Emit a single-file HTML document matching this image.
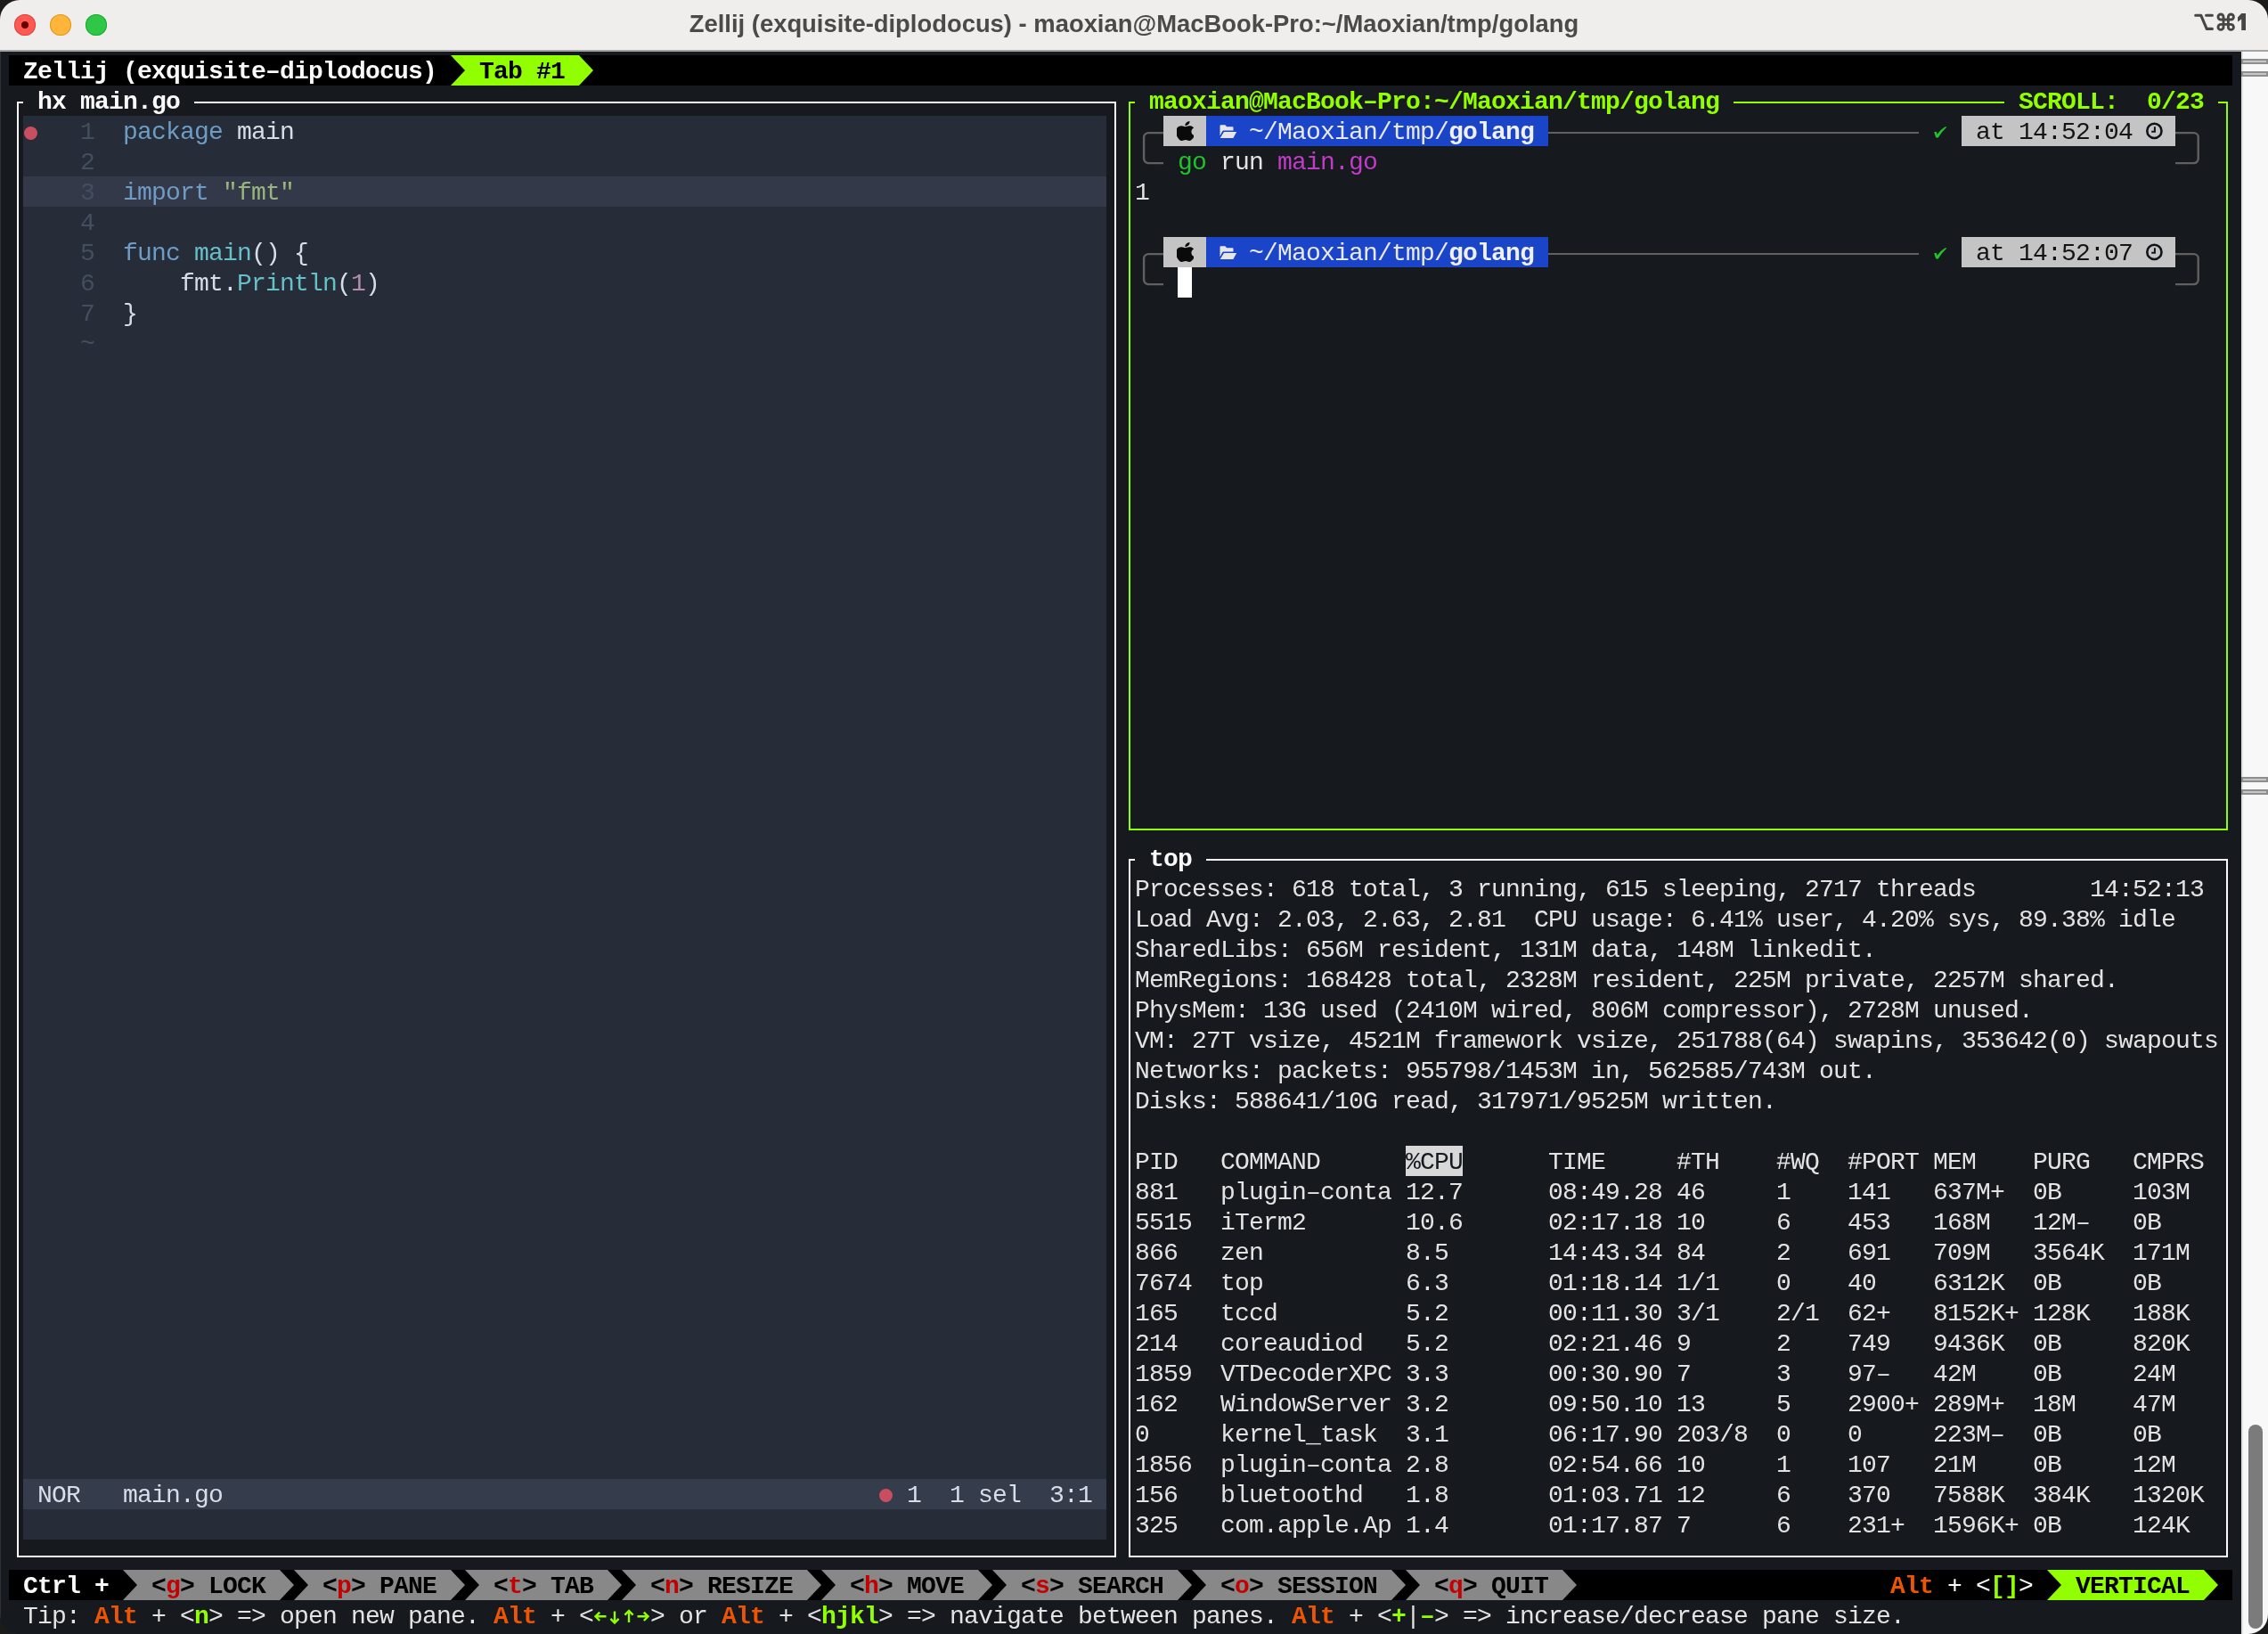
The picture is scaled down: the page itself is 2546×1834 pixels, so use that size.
<!DOCTYPE html><html><head><meta charset="utf-8"><style>
html,body{margin:0;padding:0;}
body{width:2546px;height:1834px;background:#1b1b1b;overflow:hidden;position:relative;}
#win{will-change:transform;position:absolute;left:0;top:0;width:2546px;height:1834px;border-radius:22px;overflow:hidden;background:#16191e;}
.t{position:absolute;white-space:pre;font-family:"Liberation Mono",monospace;font-size:28.0px;letter-spacing:-0.8027px;line-height:34px;}
</style></head><body><div id="win">
<div style="position:absolute;left:0px;top:0px;width:2546px;height:56px;background:#f0eeec;"></div>
<div style="position:absolute;left:0px;top:56px;width:2546px;height:2px;background:#a3a3a3;"></div>
<div style="position:absolute;left:16px;top:16px;width:24px;height:24px;border-radius:50%;background:#ff5a52;box-shadow:inset 0 0 0 1px #e0443e;"></div>
<div style="position:absolute;left:56px;top:16px;width:24px;height:24px;border-radius:50%;background:#ffb43a;box-shadow:inset 0 0 0 1px #de9a23;"></div>
<div style="position:absolute;left:96px;top:16px;width:24px;height:24px;border-radius:50%;background:#30c748;box-shadow:inset 0 0 0 1px #1aab29;"></div>
<div style="position:absolute;left:24px;top:24px;width:8px;height:8px;border-radius:50%;background:#690000;"></div>
<div style="position:absolute;left:0;top:10px;width:2546px;text-align:center;font-family:'Liberation Sans',sans-serif;font-weight:bold;font-size:27.4px;line-height:34px;color:#4a4a4a;">Zellij (exquisite-diplodocus) - maoxian@MacBook-Pro:~/Maoxian/tmp/golang</div>
<svg style="position:absolute;left:2446px;top:0px" width="100" height="50" viewBox="0 0 100 50">
<path d="M18.7 17.2 H24.7 L31.2 32.4 H37.4 M30.6 17.2 H37.4" stroke="#464646" stroke-width="3.1" fill="none" stroke-linecap="round" stroke-linejoin="round"/>
<path d="M50 27.4 V19 A3 3 0 1 0 47 22 H58.4 A3 3 0 1 0 55.4 19 V30.4 A3 3 0 1 0 58.4 27.4 H47 A3 3 0 1 0 50 30.4 V27.4" stroke="#464646" stroke-width="2.9" fill="none"/>
<polygon points="70.2,15 75,15 75,34 70.2,34 70.2,21.6 66,24.4 66,19.6" fill="#464646"/>
</svg>
<div style="position:absolute;left:2516px;top:58px;width:30px;height:1776px;background:#f8f8f8;"></div>
<div style="position:absolute;left:2516px;top:58px;width:1.5px;height:1776px;background:#e2e2e2;"></div>
<div style="position:absolute;left:2516px;top:66px;width:30px;height:5.5px;background:#8e8e8e;"></div>
<div style="position:absolute;left:2518px;top:67.8px;width:26px;height:2px;background:#c6c6c6;"></div>
<div style="position:absolute;left:2516px;top:80px;width:30px;height:5.5px;background:#8e8e8e;"></div>
<div style="position:absolute;left:2518px;top:81.8px;width:26px;height:2px;background:#c6c6c6;"></div>
<div style="position:absolute;left:2516px;top:872px;width:30px;height:5.5px;background:#8e8e8e;"></div>
<div style="position:absolute;left:2518px;top:873.8px;width:26px;height:2px;background:#c6c6c6;"></div>
<div style="position:absolute;left:2516px;top:886px;width:30px;height:5.5px;background:#8e8e8e;"></div>
<div style="position:absolute;left:2518px;top:887.8px;width:26px;height:2px;background:#c6c6c6;"></div>
<div style="position:absolute;left:2524px;top:1599px;width:16px;height:229px;border-radius:8px;background:#7b7b7b;"></div>
<div style="position:absolute;left:10px;top:62px;width:2496px;height:34px;background:#000000;"></div>
<span class="t" style="left:26px;top:63.5px;color:#fafafa;font-weight:bold;">Zellij (exquisite–diplodocus)</span>
<div style="position:absolute;left:506px;top:62px;width:144px;height:34px;background:#92ff00;"></div>
<svg style="position:absolute;left:506px;top:62px" width="16" height="34" viewBox="0 0 16 34"><polygon points="0,0 16,17.0 0,34" fill="#000000"/></svg>
<svg style="position:absolute;left:650px;top:62px" width="16" height="34" viewBox="0 0 16 34"><polygon points="0,0 16,17.0 0,34" fill="#92ff00"/></svg>
<span class="t" style="left:538px;top:63.5px;color:#000000;font-weight:bold;">Tab #1</span>
<div style="position:absolute;left:26px;top:130px;width:1216px;height:1598px;background:#262d38;"></div>
<div style="position:absolute;left:26px;top:198px;width:1216px;height:34px;background:#333949;"></div>
<div style="position:absolute;left:26px;top:1660px;width:1216px;height:34px;background:#353c4b;"></div>
<div style="position:absolute;left:19px;top:114px;width:2.2px;height:1634.2px;background:#fafafa;"></div>
<div style="position:absolute;left:1251px;top:114px;width:2.2px;height:1634.2px;background:#fafafa;"></div>
<div style="position:absolute;left:19px;top:1746px;width:1234.2px;height:2.2px;background:#fafafa;"></div>
<div style="position:absolute;left:19px;top:114px;width:7px;height:2.2px;background:#fafafa;"></div>
<div style="position:absolute;left:218px;top:114px;width:1035.2px;height:2.2px;background:#fafafa;"></div>
<span class="t" style="left:42px;top:97.5px;color:#fafafa;font-weight:bold;">hx main.go</span>
<div style="position:absolute;left:26.5px;top:141.5px;width:15.5px;height:15.5px;border-radius:50%;background:#c94f60;"></div>
<span class="t" style="left:90px;top:131.5px;color:#434e61;font-weight:normal;">1</span>
<span class="t" style="left:138px;top:131.5px;color:#6e9cc4;font-weight:normal;">package</span>
<span class="t" style="left:266px;top:131.5px;color:#d8dee9;font-weight:normal;">main</span>
<span class="t" style="left:90px;top:165.5px;color:#434e61;font-weight:normal;">2</span>
<span class="t" style="left:90px;top:199.5px;color:#434e61;font-weight:normal;">3</span>
<span class="t" style="left:138px;top:199.5px;color:#6e9cc4;font-weight:normal;">import</span>
<span class="t" style="left:250px;top:199.5px;color:#98b57f;font-weight:normal;">&quot;fmt&quot;</span>
<span class="t" style="left:90px;top:233.5px;color:#434e61;font-weight:normal;">4</span>
<span class="t" style="left:90px;top:267.5px;color:#434e61;font-weight:normal;">5</span>
<span class="t" style="left:138px;top:267.5px;color:#6e9cc4;font-weight:normal;">func</span>
<span class="t" style="left:218px;top:267.5px;color:#67bfc9;font-weight:normal;">main</span>
<span class="t" style="left:282px;top:267.5px;color:#d8dee9;font-weight:normal;">() {</span>
<span class="t" style="left:90px;top:301.5px;color:#434e61;font-weight:normal;">6</span>
<span class="t" style="left:202px;top:301.5px;color:#d8dee9;font-weight:normal;">fmt</span>
<span class="t" style="left:250px;top:301.5px;color:#d8dee9;font-weight:normal;">.</span>
<span class="t" style="left:266px;top:301.5px;color:#67bfc9;font-weight:normal;">Println</span>
<span class="t" style="left:378px;top:301.5px;color:#d8dee9;font-weight:normal;">(</span>
<span class="t" style="left:394px;top:301.5px;color:#b48ead;font-weight:normal;">1</span>
<span class="t" style="left:410px;top:301.5px;color:#d8dee9;font-weight:normal;">)</span>
<span class="t" style="left:90px;top:335.5px;color:#434e61;font-weight:normal;">7</span>
<span class="t" style="left:138px;top:335.5px;color:#d8dee9;font-weight:normal;">}</span>
<span class="t" style="left:90px;top:369.5px;color:#434e61;font-weight:normal;">~</span>
<span class="t" style="left:42px;top:1661.5px;color:#d8dee9;font-weight:normal;">NOR</span>
<span class="t" style="left:138px;top:1661.5px;color:#d8dee9;font-weight:normal;">main.go</span>
<div style="position:absolute;left:986.5px;top:1671px;width:15px;height:15px;border-radius:50%;background:#c94f60;"></div>
<span class="t" style="left:1018px;top:1661.5px;color:#d8dee9;font-weight:normal;">1</span>
<span class="t" style="left:1066px;top:1661.5px;color:#d8dee9;font-weight:normal;">1 sel</span>
<span class="t" style="left:1178px;top:1661.5px;color:#d8dee9;font-weight:normal;">3:1</span>
<div style="position:absolute;left:1267px;top:114px;width:2.2px;height:818.2px;background:#92ff00;"></div>
<div style="position:absolute;left:2499px;top:114px;width:2.2px;height:818.2px;background:#92ff00;"></div>
<div style="position:absolute;left:1267px;top:930px;width:1234.2px;height:2.2px;background:#92ff00;"></div>
<div style="position:absolute;left:1267px;top:114px;width:7px;height:2.2px;background:#92ff00;"></div>
<div style="position:absolute;left:1946px;top:114px;width:304px;height:2.2px;background:#92ff00;"></div>
<div style="position:absolute;left:2490px;top:114px;width:11.199999999999818px;height:2.2px;background:#92ff00;"></div>
<span class="t" style="left:1290px;top:97.5px;color:#92ff00;font-weight:bold;">maoxian@MacBook–Pro:~/Maoxian/tmp/golang</span>
<span class="t" style="left:2266px;top:97.5px;color:#92ff00;font-weight:bold;">SCROLL:  0/23</span>
<svg style="position:absolute;left:1274px;top:130px" width="32" height="68" viewBox="0 0 32 68"><path d="M32 19.1 H15.3 A5 5 0 0 0 10.1 24.1 V48 A5 5 0 0 0 15.3 53.1 H32" stroke="#606060" stroke-width="2.4" fill="none"/></svg>
<div style="position:absolute;left:1306px;top:130px;width:48px;height:34px;background:#c4c4c4;"></div>
<div style="position:absolute;left:1354px;top:130px;width:384px;height:34px;background:#1a45c8;"></div>
<svg style="position:absolute;left:1321px;top:136px" width="19" height="22" viewBox="3.2 0 17.8 24" preserveAspectRatio="none"><path d="M12.152 6.896c-.948 0-2.415-1.078-3.96-1.040-2.04.027-3.91 1.183-4.961 3.014-2.117 3.675-.546 9.103 1.519 12.09 1.013 1.454 2.208 3.09 3.792 3.039 1.52-.065 2.09-.987 3.935-.987 1.831 0 2.35.987 3.96.948 1.637-.026 2.676-1.48 3.676-2.948 1.156-1.688 1.636-3.325 1.662-3.415-.039-.013-3.182-1.221-3.22-4.857-.026-3.04 2.48-4.494 2.597-4.559-1.429-2.09-3.623-2.324-4.39-2.376-2-.156-3.675 1.09-4.61 1.09zM15.53 3.83c.843-1.012 1.4-2.427 1.245-3.83-1.207.052-2.662.805-3.532 1.818-.78.896-1.454 2.338-1.273 3.714 1.338.104 2.715-.688 3.559-1.701" fill="#0a0a0a"/></svg>
<svg style="position:absolute;left:1369px;top:140px" width="20" height="16" viewBox="0 0 20 16"><path d="M0.5 13.5 V1.2 Q0.5 0.3 1.4 0.3 H6.3 L8.2 2.3 H14.6 Q15.5 2.3 15.5 3.2 V6.6 H4.6 Q3.6 6.6 3.1 7.4 L0.5 12.6 Z" fill="#e6e6e6"/><path d="M5 8.1 H19.2 L15.3 15 H0.7 Z" fill="#e6e6e6"/></svg>
<span class="t" style="left:1402px;top:131.5px;color:#e8e8e8;font-weight:normal;">~/Maoxian/tmp/</span>
<span class="t" style="left:1626px;top:131.5px;color:#f0f0f0;font-weight:bold;">golang</span>
<div style="position:absolute;left:1738px;top:148px;width:416px;height:2.2px;background:#606060;"></div>
<svg style="position:absolute;left:2170px;top:141px" width="16" height="15" viewBox="0 0 16 15"><path d="M1.2 7.6 Q2.5 6.5 3.9 7.0 L4.6 9.8 Q9 3.6 14.4 0.9 L15.2 1.8 Q9.6 7 5.9 13.2 Q4.4 14.4 3.1 13.1 Z" fill="#22c22c"/></svg>
<div style="position:absolute;left:2202px;top:130px;width:240px;height:34px;background:#c4c4c4;"></div>
<span class="t" style="left:2218px;top:131.5px;color:#141414;font-weight:normal;">at 14:52:04</span>
<svg style="position:absolute;left:2409px;top:137px" width="20" height="20" viewBox="0 0 20 20"><circle cx="9.4" cy="9.9" r="8.1" stroke="#10141a" stroke-width="2.6" fill="none"/><path d="M9.9 5.3 V10.8 H6.2" stroke="#10141a" stroke-width="2" fill="none"/></svg>
<svg style="position:absolute;left:2442px;top:130px" width="32" height="68" viewBox="0 0 32 68"><path d="M0 19.1 H20.7 A5 5 0 0 1 25.7 24.1 V48 A5 5 0 0 1 20.7 53.1 H0" stroke="#606060" stroke-width="2.4" fill="none"/></svg>
<span class="t" style="left:1322px;top:165.5px;color:#22c22c;font-weight:normal;">go</span>
<span class="t" style="left:1370px;top:165.5px;color:#e3e3e3;font-weight:normal;">run</span>
<span class="t" style="left:1434px;top:165.5px;color:#c13bc8;font-weight:normal;">main.go</span>
<span class="t" style="left:1274px;top:199.5px;color:#e3e3e3;font-weight:normal;">1</span>
<svg style="position:absolute;left:1274px;top:266px" width="32" height="68" viewBox="0 0 32 68"><path d="M32 19.1 H15.3 A5 5 0 0 0 10.1 24.1 V48 A5 5 0 0 0 15.3 53.1 H32" stroke="#606060" stroke-width="2.4" fill="none"/></svg>
<div style="position:absolute;left:1306px;top:266px;width:48px;height:34px;background:#c4c4c4;"></div>
<div style="position:absolute;left:1354px;top:266px;width:384px;height:34px;background:#1a45c8;"></div>
<svg style="position:absolute;left:1321px;top:272px" width="19" height="22" viewBox="3.2 0 17.8 24" preserveAspectRatio="none"><path d="M12.152 6.896c-.948 0-2.415-1.078-3.96-1.040-2.04.027-3.91 1.183-4.961 3.014-2.117 3.675-.546 9.103 1.519 12.09 1.013 1.454 2.208 3.09 3.792 3.039 1.52-.065 2.09-.987 3.935-.987 1.831 0 2.35.987 3.96.948 1.637-.026 2.676-1.48 3.676-2.948 1.156-1.688 1.636-3.325 1.662-3.415-.039-.013-3.182-1.221-3.22-4.857-.026-3.04 2.48-4.494 2.597-4.559-1.429-2.09-3.623-2.324-4.39-2.376-2-.156-3.675 1.09-4.61 1.09zM15.53 3.83c.843-1.012 1.4-2.427 1.245-3.83-1.207.052-2.662.805-3.532 1.818-.78.896-1.454 2.338-1.273 3.714 1.338.104 2.715-.688 3.559-1.701" fill="#0a0a0a"/></svg>
<svg style="position:absolute;left:1369px;top:276px" width="20" height="16" viewBox="0 0 20 16"><path d="M0.5 13.5 V1.2 Q0.5 0.3 1.4 0.3 H6.3 L8.2 2.3 H14.6 Q15.5 2.3 15.5 3.2 V6.6 H4.6 Q3.6 6.6 3.1 7.4 L0.5 12.6 Z" fill="#e6e6e6"/><path d="M5 8.1 H19.2 L15.3 15 H0.7 Z" fill="#e6e6e6"/></svg>
<span class="t" style="left:1402px;top:267.5px;color:#e8e8e8;font-weight:normal;">~/Maoxian/tmp/</span>
<span class="t" style="left:1626px;top:267.5px;color:#f0f0f0;font-weight:bold;">golang</span>
<div style="position:absolute;left:1738px;top:284px;width:416px;height:2.2px;background:#606060;"></div>
<svg style="position:absolute;left:2170px;top:277px" width="16" height="15" viewBox="0 0 16 15"><path d="M1.2 7.6 Q2.5 6.5 3.9 7.0 L4.6 9.8 Q9 3.6 14.4 0.9 L15.2 1.8 Q9.6 7 5.9 13.2 Q4.4 14.4 3.1 13.1 Z" fill="#22c22c"/></svg>
<div style="position:absolute;left:2202px;top:266px;width:240px;height:34px;background:#c4c4c4;"></div>
<span class="t" style="left:2218px;top:267.5px;color:#141414;font-weight:normal;">at 14:52:07</span>
<svg style="position:absolute;left:2409px;top:273px" width="20" height="20" viewBox="0 0 20 20"><circle cx="9.4" cy="9.9" r="8.1" stroke="#10141a" stroke-width="2.6" fill="none"/><path d="M9.9 5.3 V10.8 H6.2" stroke="#10141a" stroke-width="2" fill="none"/></svg>
<svg style="position:absolute;left:2442px;top:266px" width="32" height="68" viewBox="0 0 32 68"><path d="M0 19.1 H20.7 A5 5 0 0 1 25.7 24.1 V48 A5 5 0 0 1 20.7 53.1 H0" stroke="#606060" stroke-width="2.4" fill="none"/></svg>
<div style="position:absolute;left:1322px;top:300px;width:16px;height:34px;background:#ffffff;"></div>
<div style="position:absolute;left:1267px;top:964px;width:2.2px;height:784.2px;background:#fafafa;"></div>
<div style="position:absolute;left:2499px;top:964px;width:2.2px;height:784.2px;background:#fafafa;"></div>
<div style="position:absolute;left:1267px;top:1746px;width:1234.2px;height:2.2px;background:#fafafa;"></div>
<div style="position:absolute;left:1267px;top:964px;width:7px;height:2.2px;background:#fafafa;"></div>
<div style="position:absolute;left:1354px;top:964px;width:1147.1999999999998px;height:2.2px;background:#fafafa;"></div>
<span class="t" style="left:1290px;top:947.5px;color:#fafafa;font-weight:bold;">top</span>
<span class="t" style="left:1274px;top:981.5px;color:#e3e3e3;font-weight:normal;">Processes: 618 total, 3 running, 615 sleeping, 2717 threads        14:52:13</span>
<span class="t" style="left:1274px;top:1015.5px;color:#e3e3e3;font-weight:normal;">Load Avg: 2.03, 2.63, 2.81  CPU usage: 6.41% user, 4.20% sys, 89.38% idle</span>
<span class="t" style="left:1274px;top:1049.5px;color:#e3e3e3;font-weight:normal;">SharedLibs: 656M resident, 131M data, 148M linkedit.</span>
<span class="t" style="left:1274px;top:1083.5px;color:#e3e3e3;font-weight:normal;">MemRegions: 168428 total, 2328M resident, 225M private, 2257M shared.</span>
<span class="t" style="left:1274px;top:1117.5px;color:#e3e3e3;font-weight:normal;">PhysMem: 13G used (2410M wired, 806M compressor), 2728M unused.</span>
<span class="t" style="left:1274px;top:1151.5px;color:#e3e3e3;font-weight:normal;">VM: 27T vsize, 4521M framework vsize, 251788(64) swapins, 353642(0) swapouts</span>
<span class="t" style="left:1274px;top:1185.5px;color:#e3e3e3;font-weight:normal;">Networks: packets: 955798/1453M in, 562585/743M out.</span>
<span class="t" style="left:1274px;top:1219.5px;color:#e3e3e3;font-weight:normal;">Disks: 588641/10G read, 317971/9525M written.</span>
<div style="position:absolute;left:1578px;top:1286px;width:64px;height:34px;background:#d8d8d8;"></div>
<span class="t" style="left:1274px;top:1287.5px;color:#e3e3e3;font-weight:normal;">PID   COMMAND</span>
<span class="t" style="left:1578px;top:1287.5px;color:#16191e;font-weight:normal;">%CPU</span>
<span class="t" style="left:1738px;top:1287.5px;color:#e3e3e3;font-weight:normal;"></span>
<span class="t" style="left:1738px;top:1287.5px;color:#e3e3e3;font-weight:normal;">TIME     #TH    #WQ  #PORT MEM    PURG   CMPRS</span>
<span class="t" style="left:1274px;top:1321.5px;color:#e3e3e3;font-weight:normal;">881   plugin–conta 12.7      08:49.28 46     1    141   637M+  0B     103M</span>
<span class="t" style="left:1274px;top:1355.5px;color:#e3e3e3;font-weight:normal;">5515  iTerm2       10.6      02:17.18 10     6    453   168M   12M–   0B</span>
<span class="t" style="left:1274px;top:1389.5px;color:#e3e3e3;font-weight:normal;">866   zen          8.5       14:43.34 84     2    691   709M   3564K  171M</span>
<span class="t" style="left:1274px;top:1423.5px;color:#e3e3e3;font-weight:normal;">7674  top          6.3       01:18.14 1/1    0    40    6312K  0B     0B</span>
<span class="t" style="left:1274px;top:1457.5px;color:#e3e3e3;font-weight:normal;">165   tccd         5.2       00:11.30 3/1    2/1  62+   8152K+ 128K   188K</span>
<span class="t" style="left:1274px;top:1491.5px;color:#e3e3e3;font-weight:normal;">214   coreaudiod   5.2       02:21.46 9      2    749   9436K  0B     820K</span>
<span class="t" style="left:1274px;top:1525.5px;color:#e3e3e3;font-weight:normal;">1859  VTDecoderXPC 3.3       00:30.90 7      3    97–   42M    0B     24M</span>
<span class="t" style="left:1274px;top:1559.5px;color:#e3e3e3;font-weight:normal;">162   WindowServer 3.2       09:50.10 13     5    2900+ 289M+  18M    47M</span>
<span class="t" style="left:1274px;top:1593.5px;color:#e3e3e3;font-weight:normal;">0     kernel_task  3.1       06:17.90 203/8  0    0     223M–  0B     0B</span>
<span class="t" style="left:1274px;top:1627.5px;color:#e3e3e3;font-weight:normal;">1856  plugin–conta 2.8       02:54.66 10     1    107   21M    0B     12M</span>
<span class="t" style="left:1274px;top:1661.5px;color:#e3e3e3;font-weight:normal;">156   bluetoothd   1.8       01:03.71 12     6    370   7588K  384K   1320K</span>
<span class="t" style="left:1274px;top:1695.5px;color:#e3e3e3;font-weight:normal;">325   com.apple.Ap 1.4       01:17.87 7      6    231+  1596K+ 0B     124K</span>
<div style="position:absolute;left:10px;top:1762px;width:2496px;height:34px;background:#000000;"></div>
<span class="t" style="left:26px;top:1763.5px;color:#fafafa;font-weight:bold;">Ctrl +</span>
<div style="position:absolute;left:138px;top:1762px;width:176px;height:34px;background:#888888;"></div>
<svg style="position:absolute;left:138px;top:1762px" width="16" height="34" viewBox="0 0 16 34"><polygon points="0,0 16,17.0 0,34" fill="#000000"/></svg>
<span class="t" style="left:170px;top:1763.5px;color:#000000;font-weight:bold;">&lt;</span>
<span class="t" style="left:186px;top:1763.5px;color:#c40000;font-weight:bold;">g</span>
<span class="t" style="left:202px;top:1763.5px;color:#000000;font-weight:bold;">&gt; LOCK</span>
<svg style="position:absolute;left:314px;top:1762px" width="16" height="34" viewBox="0 0 16 34"><polygon points="0,0 16,17.0 0,34" fill="#888888"/></svg>
<div style="position:absolute;left:330px;top:1762px;width:176px;height:34px;background:#888888;"></div>
<svg style="position:absolute;left:330px;top:1762px" width="16" height="34" viewBox="0 0 16 34"><polygon points="0,0 16,17.0 0,34" fill="#000000"/></svg>
<span class="t" style="left:362px;top:1763.5px;color:#000000;font-weight:bold;">&lt;</span>
<span class="t" style="left:378px;top:1763.5px;color:#c40000;font-weight:bold;">p</span>
<span class="t" style="left:394px;top:1763.5px;color:#000000;font-weight:bold;">&gt; PANE</span>
<svg style="position:absolute;left:506px;top:1762px" width="16" height="34" viewBox="0 0 16 34"><polygon points="0,0 16,17.0 0,34" fill="#888888"/></svg>
<div style="position:absolute;left:522px;top:1762px;width:160px;height:34px;background:#888888;"></div>
<svg style="position:absolute;left:522px;top:1762px" width="16" height="34" viewBox="0 0 16 34"><polygon points="0,0 16,17.0 0,34" fill="#000000"/></svg>
<span class="t" style="left:554px;top:1763.5px;color:#000000;font-weight:bold;">&lt;</span>
<span class="t" style="left:570px;top:1763.5px;color:#c40000;font-weight:bold;">t</span>
<span class="t" style="left:586px;top:1763.5px;color:#000000;font-weight:bold;">&gt; TAB</span>
<svg style="position:absolute;left:682px;top:1762px" width="16" height="34" viewBox="0 0 16 34"><polygon points="0,0 16,17.0 0,34" fill="#888888"/></svg>
<div style="position:absolute;left:698px;top:1762px;width:208px;height:34px;background:#888888;"></div>
<svg style="position:absolute;left:698px;top:1762px" width="16" height="34" viewBox="0 0 16 34"><polygon points="0,0 16,17.0 0,34" fill="#000000"/></svg>
<span class="t" style="left:730px;top:1763.5px;color:#000000;font-weight:bold;">&lt;</span>
<span class="t" style="left:746px;top:1763.5px;color:#c40000;font-weight:bold;">n</span>
<span class="t" style="left:762px;top:1763.5px;color:#000000;font-weight:bold;">&gt; RESIZE</span>
<svg style="position:absolute;left:906px;top:1762px" width="16" height="34" viewBox="0 0 16 34"><polygon points="0,0 16,17.0 0,34" fill="#888888"/></svg>
<div style="position:absolute;left:922px;top:1762px;width:176px;height:34px;background:#888888;"></div>
<svg style="position:absolute;left:922px;top:1762px" width="16" height="34" viewBox="0 0 16 34"><polygon points="0,0 16,17.0 0,34" fill="#000000"/></svg>
<span class="t" style="left:954px;top:1763.5px;color:#000000;font-weight:bold;">&lt;</span>
<span class="t" style="left:970px;top:1763.5px;color:#c40000;font-weight:bold;">h</span>
<span class="t" style="left:986px;top:1763.5px;color:#000000;font-weight:bold;">&gt; MOVE</span>
<svg style="position:absolute;left:1098px;top:1762px" width="16" height="34" viewBox="0 0 16 34"><polygon points="0,0 16,17.0 0,34" fill="#888888"/></svg>
<div style="position:absolute;left:1114px;top:1762px;width:208px;height:34px;background:#888888;"></div>
<svg style="position:absolute;left:1114px;top:1762px" width="16" height="34" viewBox="0 0 16 34"><polygon points="0,0 16,17.0 0,34" fill="#000000"/></svg>
<span class="t" style="left:1146px;top:1763.5px;color:#000000;font-weight:bold;">&lt;</span>
<span class="t" style="left:1162px;top:1763.5px;color:#c40000;font-weight:bold;">s</span>
<span class="t" style="left:1178px;top:1763.5px;color:#000000;font-weight:bold;">&gt; SEARCH</span>
<svg style="position:absolute;left:1322px;top:1762px" width="16" height="34" viewBox="0 0 16 34"><polygon points="0,0 16,17.0 0,34" fill="#888888"/></svg>
<div style="position:absolute;left:1338px;top:1762px;width:224px;height:34px;background:#888888;"></div>
<svg style="position:absolute;left:1338px;top:1762px" width="16" height="34" viewBox="0 0 16 34"><polygon points="0,0 16,17.0 0,34" fill="#000000"/></svg>
<span class="t" style="left:1370px;top:1763.5px;color:#000000;font-weight:bold;">&lt;</span>
<span class="t" style="left:1386px;top:1763.5px;color:#c40000;font-weight:bold;">o</span>
<span class="t" style="left:1402px;top:1763.5px;color:#000000;font-weight:bold;">&gt; SESSION</span>
<svg style="position:absolute;left:1562px;top:1762px" width="16" height="34" viewBox="0 0 16 34"><polygon points="0,0 16,17.0 0,34" fill="#888888"/></svg>
<div style="position:absolute;left:1578px;top:1762px;width:176px;height:34px;background:#888888;"></div>
<svg style="position:absolute;left:1578px;top:1762px" width="16" height="34" viewBox="0 0 16 34"><polygon points="0,0 16,17.0 0,34" fill="#000000"/></svg>
<span class="t" style="left:1610px;top:1763.5px;color:#000000;font-weight:bold;">&lt;</span>
<span class="t" style="left:1626px;top:1763.5px;color:#c40000;font-weight:bold;">q</span>
<span class="t" style="left:1642px;top:1763.5px;color:#000000;font-weight:bold;">&gt; QUIT</span>
<svg style="position:absolute;left:1754px;top:1762px" width="16" height="34" viewBox="0 0 16 34"><polygon points="0,0 16,17.0 0,34" fill="#888888"/></svg>
<span class="t" style="left:2122px;top:1763.5px;color:#ee5500;font-weight:bold;">Alt</span>
<span class="t" style="left:2186px;top:1763.5px;color:#fafafa;font-weight:normal;">+</span>
<span class="t" style="left:2218px;top:1763.5px;color:#fafafa;font-weight:normal;">&lt;</span>
<span class="t" style="left:2234px;top:1763.5px;color:#92ff00;font-weight:bold;">[]</span>
<span class="t" style="left:2266px;top:1763.5px;color:#fafafa;font-weight:normal;">&gt;</span>
<div style="position:absolute;left:2298px;top:1762px;width:176px;height:34px;background:#92ff00;"></div>
<svg style="position:absolute;left:2298px;top:1762px" width="16" height="34" viewBox="0 0 16 34"><polygon points="0,0 16,17.0 0,34" fill="#000000"/></svg>
<svg style="position:absolute;left:2474px;top:1762px" width="16" height="34" viewBox="0 0 16 34"><polygon points="0,0 16,17.0 0,34" fill="#92ff00"/></svg>
<span class="t" style="left:2330px;top:1763.5px;color:#000000;font-weight:bold;">VERTICAL</span>
<span class="t" style="left:26px;top:1797.5px;color:#e3e3e3;font-weight:normal;">Tip: </span>
<span class="t" style="left:106px;top:1797.5px;color:#ee5500;font-weight:bold;">Alt</span>
<span class="t" style="left:154px;top:1797.5px;color:#e3e3e3;font-weight:normal;"> + &lt;</span>
<span class="t" style="left:218px;top:1797.5px;color:#92ff00;font-weight:bold;">n</span>
<span class="t" style="left:234px;top:1797.5px;color:#e3e3e3;font-weight:normal;">&gt; =&gt; open new pane. </span>
<span class="t" style="left:554px;top:1797.5px;color:#ee5500;font-weight:bold;">Alt</span>
<span class="t" style="left:602px;top:1797.5px;color:#e3e3e3;font-weight:normal;"> + &lt;</span>
<span class="t" style="left:666px;top:1797.5px;color:#92ff00;font-weight:bold;">    </span>
<span class="t" style="left:730px;top:1797.5px;color:#e3e3e3;font-weight:normal;">&gt; or </span>
<span class="t" style="left:810px;top:1797.5px;color:#ee5500;font-weight:bold;">Alt</span>
<span class="t" style="left:858px;top:1797.5px;color:#e3e3e3;font-weight:normal;"> + &lt;</span>
<span class="t" style="left:922px;top:1797.5px;color:#92ff00;font-weight:bold;">hjkl</span>
<span class="t" style="left:986px;top:1797.5px;color:#e3e3e3;font-weight:normal;">&gt; =&gt; navigate between panes. </span>
<span class="t" style="left:1450px;top:1797.5px;color:#ee5500;font-weight:bold;">Alt</span>
<span class="t" style="left:1498px;top:1797.5px;color:#e3e3e3;font-weight:normal;"> + &lt;</span>
<span class="t" style="left:1562px;top:1797.5px;color:#92ff00;font-weight:bold;">+</span>
<span class="t" style="left:1578px;top:1797.5px;color:#e3e3e3;font-weight:normal;">|</span>
<span class="t" style="left:1594px;top:1797.5px;color:#92ff00;font-weight:bold;">–</span>
<span class="t" style="left:1610px;top:1797.5px;color:#e3e3e3;font-weight:normal;">&gt; =&gt; increase/decrease pane size.</span>
<svg style="position:absolute;left:0;top:0" width="2546" height="1834" viewBox="0 0 2546 1834"><path d="M668.5 1814.3 H680.5 M673.2 1809.6 L668.5 1814.3 L673.2 1819" stroke="#92ff00" stroke-width="2.4" fill="none" stroke-linecap="butt"/><path d="M690 1808.5 V1821.5 M685.4 1816.9 L690 1821.5 L694.6 1816.9" stroke="#92ff00" stroke-width="2.4" fill="none" stroke-linecap="butt"/><path d="M706 1808 V1821 M701.4 1812.6 L706 1808 L710.6 1812.6" stroke="#92ff00" stroke-width="2.4" fill="none" stroke-linecap="butt"/><path d="M715.5 1814.3 H727.5 M722.8 1809.6 L727.5 1814.3 L722.8 1819" stroke="#92ff00" stroke-width="2.4" fill="none" stroke-linecap="butt"/></svg>
<div style="position:absolute;left:0px;top:58px;width:1.2px;height:1776px;background:#2e3236;"></div>
</div></body></html>
